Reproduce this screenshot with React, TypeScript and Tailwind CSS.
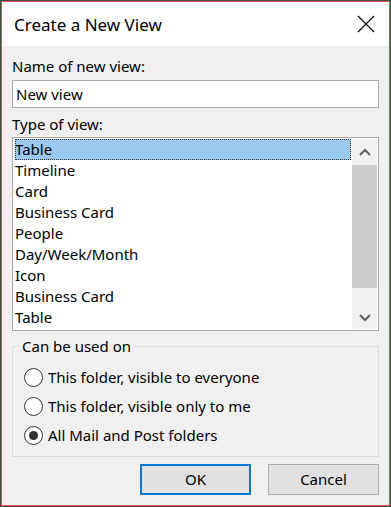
import React, { useState } from 'react';

const viewTypes = [
  'Table',
  'Timeline',
  'Card',
  'Business Card',
  'People',
  'Day/Week/Month',
  'Icon',
  'Business Card',
  'Table',
];

const scopes = [
  'This folder, visible to everyone',
  'This folder, visible only to me',
  'All Mail and Post folders',
];

const Radio: React.FC<{ checked: boolean; label: string; onClick: () => void }> = ({ checked, label, onClick }) => (
  <div className="flex items-center h-[29px] cursor-default" onClick={onClick}>
    <span className="w-[19px] h-[19px] rounded-full border border-[#333] bg-white flex items-center justify-center mr-[5px]">
      {checked && <span className="w-[9px] h-[9px] rounded-full bg-[#333]" />}
    </span>
    <span>{label}</span>
  </div>
);

export default function App() {
  const [name, setName] = useState('New view');
  const [selected, setSelected] = useState(0);
  const [scope, setScope] = useState(2);

  return (
    <div
      className="w-[391px] h-[507px] bg-[#f0f0f0] border border-[#4a4a4a] shadow-[inset_0_0_0_1px_#d9534f] text-[15px] text-black flex flex-col"
      style={{ fontFamily: '"Noto Sans", "Open Sans", sans-serif' }}
    >
      {/* Title bar */}
      <div className="h-[44px] bg-white flex items-center justify-between pl-[12px] pr-[14px] mx-px mt-px">
        <span className="text-[17px] leading-none">Create a New View</span>
        <svg width="18" height="18" viewBox="0 0 18 18" className="stroke-black">
          <path d="M1 1 L17 17 M17 1 L1 17" strokeWidth="1.1" fill="none" />
        </svg>
      </div>

      <div className="flex flex-col px-[10px] mx-px">
        <label className="mt-[10px] leading-[20px]">Name of new view:</label>
        <input
          value={name}
          onChange={(e) => setName(e.target.value)}
          className="mt-[4px] h-[28px] bg-white border border-[#a9a9a9] px-[3px] outline-none"
        />

        <label className="mt-[6px] leading-[20px]">Type of view:</label>
        <div className="mt-[3px] h-[194px] bg-white border border-[#a9a9a9] flex">
          <div className="flex-1 flex flex-col pt-px pl-[2px]">
            {viewTypes.map((v, i) => (
              <div
                key={i}
                onClick={() => setSelected(i)}
                className={`h-[21px] leading-[20px] ${
                  i === selected ? 'bg-[#99c9ef] outline outline-1 outline-dotted outline-[#333] -outline-offset-1' : ''
                }`}
              >
                {v}
              </div>
            ))}
          </div>
          {/* Scrollbar */}
          <div className="w-[25px] bg-[#f0f0f0] flex flex-col my-px mr-px ml-px">
            <div className="h-[26px] flex items-center justify-center">
              <svg width="12" height="8" viewBox="0 0 12 8">
                <path d="M1 7 L6 2 L11 7" stroke="#606060" strokeWidth="2" fill="none" />
              </svg>
            </div>
            <div className="h-[123px] bg-[#cdcdcd]" />
            <div className="flex-1 flex items-end justify-center pb-[7px]">
              <svg width="12" height="8" viewBox="0 0 12 8">
                <path d="M1 1 L6 6 L11 1" stroke="#606060" strokeWidth="2" fill="none" />
              </svg>
            </div>
          </div>
        </div>

        {/* Group box */}
        <fieldset className="mt-[5px] border border-[#dcdcdc] h-[121px] pl-[11px] pr-[8px]">
          <legend className="px-[2px] -ml-[4px] leading-[20px]">Can be used on</legend>
          <div className="flex flex-col mt-[7px]">
            {scopes.map((s, i) => (
              <Radio key={i} label={s} checked={scope === i} onClick={() => setScope(i)} />
            ))}
          </div>
        </fieldset>

        <div className="flex justify-end gap-[17px] mt-[7px]">
          <button className="w-[111px] h-[31px] bg-[#e1e1e1] border-2 border-[#0078d7]">OK</button>
          <button className="w-[111px] h-[31px] bg-[#e1e1e1] border border-[#adadad]">Cancel</button>
        </div>
      </div>
    </div>
  );
}
